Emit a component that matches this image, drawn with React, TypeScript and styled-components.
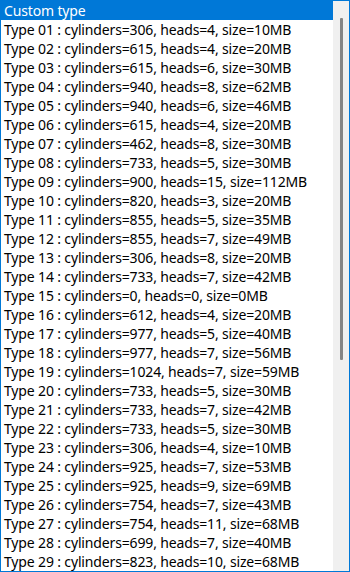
import React from "react";
import styled, { createGlobalStyle } from "styled-components";

const Global = createGlobalStyle`
  html, body { margin: 0; padding: 0; background: #ffffff; }
  * { box-sizing: border-box; }
`;

const Frame = styled.div`
  width: 350px;
  height: 572px;
  border: 1px solid #0078d7;
  display: flex;
  flex-direction: row;
  background: #ffffff;
  overflow: hidden;
`;

const List = styled.ul`
  flex: 1;
  margin: 0;
  padding: 0;
  list-style: none;
  overflow: hidden;
  display: flex;
  flex-direction: column;
`;

const Item = styled.li<{ $selected?: boolean }>`
  height: 19px;
  flex: none;
  padding-left: 3px;
  display: flex;
  align-items: center;
  font-family: "Noto Sans", "Open Sans", sans-serif;
  font-size: 14px;
  letter-spacing: -0.15px;
  white-space: nowrap;
  color: ${(p) => (p.$selected ? "#ffffff" : "#000000")};
  background: ${(p) => (p.$selected ? "#0078d7" : "transparent")};
`;

const ScrollTrack = styled.div`
  width: 16px;
  flex: none;
  background: #f0f0f0;
  display: flex;
  flex-direction: column;
  align-items: center;
  padding-top: 17px;
`;

const Thumb = styled.div`
  width: 3px;
  height: 342px;
  background: #858585;
  border-radius: 1px;
`;

const data: [number, number, number][] = [
  [306, 4, 10],
  [615, 4, 20],
  [615, 6, 30],
  [940, 8, 62],
  [940, 6, 46],
  [615, 4, 20],
  [462, 8, 30],
  [733, 5, 30],
  [900, 15, 112],
  [820, 3, 20],
  [855, 5, 35],
  [855, 7, 49],
  [306, 8, 20],
  [733, 7, 42],
  [0, 0, 0],
  [612, 4, 20],
  [977, 5, 40],
  [977, 7, 56],
  [1024, 7, 59],
  [733, 5, 30],
  [733, 7, 42],
  [733, 5, 30],
  [306, 4, 10],
  [925, 7, 53],
  [925, 9, 69],
  [754, 7, 43],
  [754, 11, 68],
  [699, 7, 40],
  [823, 10, 68],
];

export default function App() {
  return (
    <>
      <Global />
      <Frame>
        <List>
          <Item $selected>Custom type</Item>
          {data.map(([c, h, s], i) => (
            <Item key={i}>
              {`Type ${String(i + 1).padStart(2, "0")} : cylinders=${c}, heads=${h}, size=${s}MB`}
            </Item>
          ))}
        </List>
        <ScrollTrack>
          <Thumb />
        </ScrollTrack>
      </Frame>
    </>
  );
}
